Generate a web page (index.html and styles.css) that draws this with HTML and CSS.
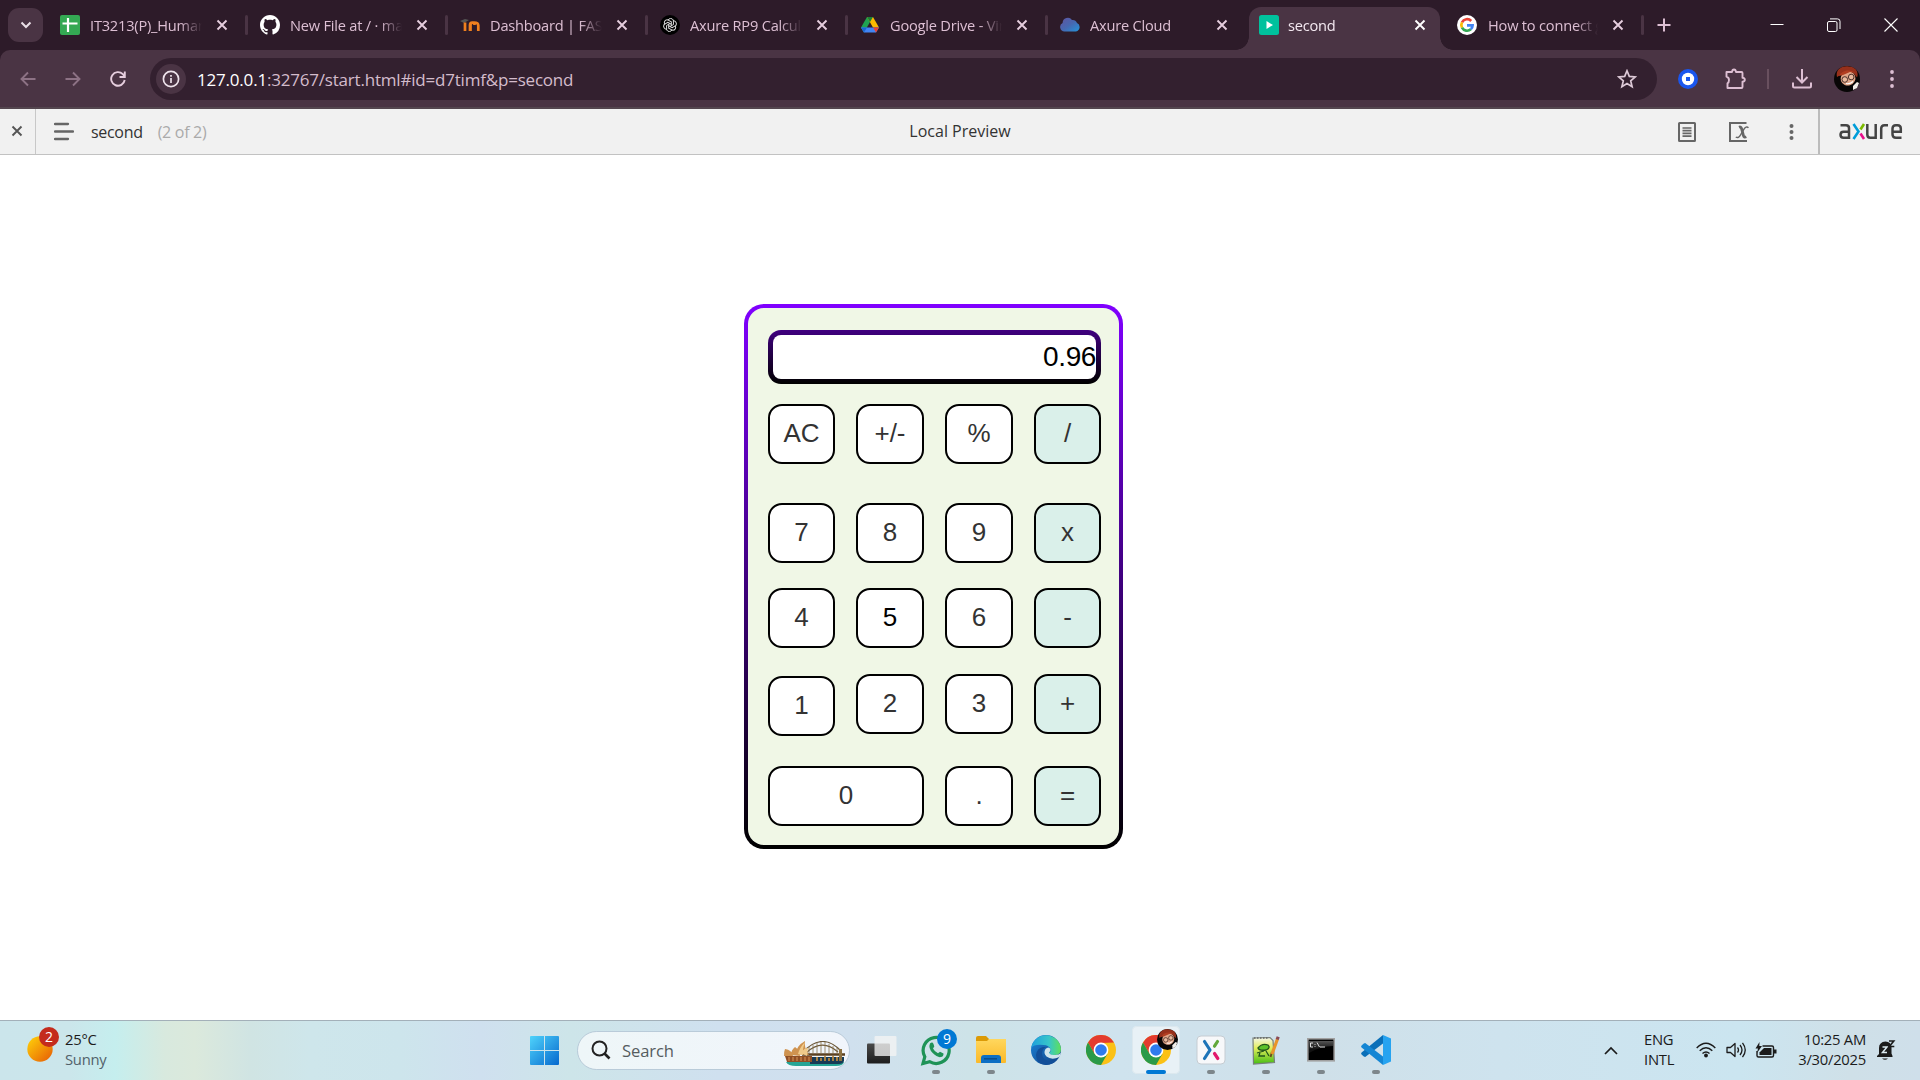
FILE: index.html
```html
<!DOCTYPE html>
<html lang="en">
<head>
<meta charset="utf-8">
<title>second</title>
<link rel="stylesheet" href="styles.css">
</head>
<body>
<svg width="0" height="0" class="defs">
  <defs>
    <symbol id="x" viewBox="0 0 16 16"><path d="M3.500 3.500l9 9M12.500 3.500l-9 9" stroke="currentColor" stroke-width="1.900" fill="none"/></symbol>
    <symbol id="chrome" viewBox="0 0 30 30">
      <circle cx="15" cy="15" r="15" fill="#fbc116"/>
      <path d="M2 7.500A15 15 0 0 1 28 7.500L15 8 8.500 18.700z" fill="#e33b2e"/>
      <path d="M2 7.500A15 15 0 0 0 15 30L21.500 18.700 15 22 8.500 18.700z" fill="#2a9a48"/>
      <circle cx="15" cy="15" r="7.400" fill="#fff"/><circle cx="15" cy="15" r="5.800" fill="#2f7bed"/>
    </symbol>
    <symbol id="avatar" viewBox="0 0 26 26">
      <circle cx="13" cy="13" r="13" fill="#080606"/>
      <path d="M3 11C1 3 9-1 15 .5c7 .5 10 6 8 11l-4-5-10 1z" fill="#96301b"/>
      <ellipse cx="14" cy="12.500" rx="7.500" ry="7" fill="#dfa486" transform="rotate(-20 14 12.500)"/>
      <path d="M5 10C7 5 15 2 21.500 7l-5.500-1-7 3z" fill="#b13d20"/>
      <circle cx="10.800" cy="13.500" r="2.800" fill="#e9b99d" stroke="#3b2420" stroke-width=".9"/><circle cx="17.200" cy="11" r="2.800" fill="#e9b99d" stroke="#3b2420" stroke-width=".9"/>
      <path d="M12 17.500q4 1 7-2" stroke="#fff" stroke-width="1.200" fill="none"/>
      <path d="M19 20l4-4 2 1-2 5-4 2z" fill="#f3eee9"/>
    </symbol>
    <linearGradient id="win" x2="1" y2="1"><stop stop-color="#4fd3fb"/><stop offset="1" stop-color="#0669ce"/></linearGradient>
    <linearGradient id="sun" x2="1" y2="1"><stop offset=".1" stop-color="#fdc909"/><stop offset="1" stop-color="#e65a05"/></linearGradient>
    <linearGradient id="dark" x2="0" y2="1"><stop stop-color="#4a4a4a"/><stop offset="1" stop-color="#1d1d1d"/></linearGradient>
    <linearGradient id="edgeTop" x2="1" y2="0"><stop stop-color="#1f9fdc"/><stop offset=".6" stop-color="#37c6c9"/><stop offset="1" stop-color="#5fe05a"/></linearGradient>
    <linearGradient id="edgeLow" x2="1" y2="1"><stop stop-color="#1a86dd"/><stop offset="1" stop-color="#123f80"/></linearGradient>
    <linearGradient id="folder" x2="0" y2="1"><stop stop-color="#ffd75e"/><stop offset="1" stop-color="#fbb928"/></linearGradient>
    <linearGradient id="cloud" x2="1" y2="1"><stop stop-color="#5f55a0"/><stop offset=".5" stop-color="#4767b1"/><stop offset="1" stop-color="#2494da"/></linearGradient>
    <linearGradient id="term" x2="0" y2="1"><stop stop-color="#555"/><stop offset=".7" stop-color="#111"/></linearGradient>
    <linearGradient id="note" x2="0" y2="1"><stop stop-color="#f4f5ea"/><stop offset=".4" stop-color="#e3ee5c"/><stop offset="1" stop-color="#45bd12"/></linearGradient>
  </defs>
</svg>

<div class="browser">
<header class="tabstrip">
  <button class="tab-search"><svg width="14" height="14" viewBox="0 0 14 14"><path d="M2.500 4.500L7 9l4.500-4.500" stroke="#eadfe7" stroke-width="2" fill="none"/></svg></button>

  <div class="tab">
    <svg class="fav" viewBox="0 0 20 20"><rect width="20" height="20" rx="2" fill="#34a853"/><path d="M8 3v14M2.500 8.500h15" stroke="#fff" stroke-width="2.200"/></svg>
    <span class="title">IT3213(P)_Human</span><svg class="close"><use href="#x"/></svg>
  </div>
  <div class="tab">
    <svg class="fav" viewBox="0 0 16 16"><path fill="#fff" d="M8 0C3.580 0 0 3.580 0 8c0 3.540 2.290 6.530 5.470 7.590.4.070.55-.17.55-.38 0-.19-.01-.82-.01-1.490-2.010.37-2.530-.49-2.690-.94-.09-.23-.48-.94-.82-1.130-.28-.15-.68-.52-.01-.53.63-.01 1.080.58 1.230.82.72 1.210 1.870.87 2.330.66.070-.52.28-.87.51-1.070-1.780-.2-3.640-.89-3.640-3.950 0-.87.31-1.590.82-2.150-.08-.2-.36-1.020.08-2.120 0 0 .67-.21 2.200.82.64-.18 1.320-.27 2-.27s1.360.09 2 .27c1.530-1.040 2.200-.82 2.200-.82.44 1.100.16 1.920.08 2.120.51.56.82 1.270.82 2.150 0 3.070-1.870 3.750-3.650 3.950.29.25.54.73.54 1.480 0 1.070-.01 1.930-.01 2.200 0 .21.15.46.55.38A8.010 8.010 0 0 0 16 8c0-4.420-3.580-8-8-8z"/></svg>
    <span class="title">New File at / · mal</span><svg class="close"><use href="#x"/></svg>
  </div>
  <div class="tab">
    <svg class="fav" viewBox="0 0 20 20"><path d="M0 6l5-2 4 1-5 3z" fill="#555"/><path d="M5 16V7.500M10 16v-6q0-2.500 2.300-2.500T14.500 10M10.500 16v-6.500q.5-2 3.500-2 4.300 0 4.300 3V16" stroke="#f0801e" stroke-width="2.700" fill="none"/></svg>
    <span class="title">Dashboard | FASV</span><svg class="close"><use href="#x"/></svg>
  </div>
  <div class="tab">
    <svg class="fav" viewBox="0 0 20 20"><circle cx="10" cy="10" r="10" fill="#000"/><g fill="none" stroke="#ddd" stroke-width="1"><path id="petal" d="M8 5.200a3 3 0 0 1 5.300-.2L13.500 9.500 10 11.500"/><use href="#petal" transform="rotate(60 10 10)"/><use href="#petal" transform="rotate(120 10 10)"/><use href="#petal" transform="rotate(180 10 10)"/><use href="#petal" transform="rotate(240 10 10)"/><use href="#petal" transform="rotate(300 10 10)"/></g></svg>
    <span class="title">Axure RP9 Calcula</span><svg class="close"><use href="#x"/></svg>
  </div>
  <div class="tab">
    <svg class="fav" viewBox="0 0 20 20"><path d="M7 2L10 7 4 17.500 1 12.500z" fill="#1fa351"/><path d="M7 2h6l6 10.500h-6z" fill="#fcb900"/><path d="M13 2L7 2l3 5z" fill="#188038"/><path d="M1 12.500h18L16 17.500H4z" fill="#4285f4"/><path d="M13 12.500h6L16 17.500z" fill="#ea4335"/><path d="M1 12.500h6L4 17.500z" fill="#1967d2"/></svg>
    <span class="title">Google Drive - Vir</span><svg class="close"><use href="#x"/></svg>
  </div>
  <div class="tab last-before">
    <svg class="fav" viewBox="0 0 20 20"><path d="M4.500 16.500A4.500 4.500 0 0 1 2.600 8a5.200 5.200 0 0 1 9.400-3 4.800 4.800 0 0 1 5 3 4.500 4.500 0 0 1-1 8.500z" fill="url(#cloud)"/></svg>
    <span class="title">Axure Cloud</span><svg class="close"><use href="#x"/></svg>
  </div>
  <div class="tab active">
    <svg class="fav" viewBox="0 0 20 20"><rect width="20" height="20" rx="2.500" fill="#00c19d"/><path d="M7.500 6v8l6.500-4z" fill="#fff"/></svg>
    <span class="title">second</span><svg class="close"><use href="#x"/></svg>
  </div>
  <div class="tab google">
    <svg class="fav" viewBox="0 0 20 20"><circle cx="10" cy="10" r="10" fill="#fff"/><g fill="none" stroke-width="2.700"><path d="M5 7.300A5.700 5.700 0 0 1 14.200 6" stroke="#ea4335"/><path d="M5 7.300a5.700 5.700 0 0 0 0 5.400" stroke="#fbbc05"/><path d="M5 12.700a5.700 5.700 0 0 0 8.800 1.600" stroke="#34a853"/><path d="M13.800 14.300a5.500 5.500 0 0 0 1.800-4H10" stroke="#4285f4"/></g></svg>
    <span class="title">How to connect g</span><svg class="close"><use href="#x"/></svg>
  </div>
  <svg class="plus" width="14" height="14" viewBox="0 0 14 14"><path d="M7 .5v13M.5 7h13" stroke="#ddbfd3" stroke-width="2"/></svg>
  <div class="window-buttons">
    <svg width="14" height="14" viewBox="0 0 14 14"><path d="M.5 6.500h13" stroke="#fff"/></svg>
    <svg width="14" height="14" viewBox="0 0 14 14"><rect x=".5" y="3.500" width="9.500" height="10" rx="1.500" stroke="#fff" fill="none"/><path d="M3 .9h7.500Q13 .9 13 3.300V11" stroke="#fff" fill="none"/></svg>
    <svg width="14" height="14" viewBox="0 0 14 14"><path d="M.5.5l13 13M13.500.5l-13 13" stroke="#fff" stroke-width="1.100"/></svg>
  </div>
</header>

<nav class="toolbar">
  <div class="nav-icons">
    <svg viewBox="0 0 16 16" class="dim"><path d="M15.500 8H1.500M8 1.500L1.500 8 8 14.500"/></svg>
    <svg viewBox="0 0 16 16" class="dim"><path d="M.5 8h14M8 1.500L14.500 8 8 14.500"/></svg>
    <svg viewBox="0 0 16 16"><path d="M14.700 9A6.800 6.800 0 1 1 12.800 3.100L14.500 5M14.800.5V6H9.500"/></svg>
  </div>
  <div class="omnibox">
    <span class="info"><svg width="18" height="18" viewBox="0 0 18 18"><circle cx="9" cy="9" r="7.600" fill="none" stroke="#eee3eb" stroke-width="1.700"/><path d="M9 8v5M9 5v1.800" stroke="#eee3eb" stroke-width="1.700"/></svg></span>
    <span class="url"><b>127.0.0.1</b>:32767/start.html#id=d7timf&amp;p=second</span>
    <svg class="star" width="20" height="20" viewBox="0 0 20 20"><path d="M10 1.800l2.300 5.600 6 .5-4.600 3.900 1.400 5.900-5.100-3.200-5.100 3.200 1.400-5.900L1.700 7.900l6-.5z" fill="none" stroke="#ddc9d7" stroke-width="1.700"/></svg>
  </div>
  <div class="extensions">
    <svg width="20" height="20" viewBox="0 0 20 20"><circle cx="10" cy="10" r="10" fill="#1a56ee"/><circle cx="10" cy="10" r="6.200" fill="#fff"/><rect x="8" y="8" width="4" height="4" fill="#1a56ee"/></svg>
    <svg width="22" height="22" viewBox="0 0 22 22"><path d="M2.500 4H8q.3-2.500 2-2.500T12 4h5.500q1 0 1 1v4.800q2.300.2 2.300 2t-2.300 2V19q0 1-1 1h-14v-4.700Q5 14.500 5 12T2.500 8.700z" fill="none" stroke="#ddbfd3" stroke-width="1.900" stroke-linejoin="round"/></svg>
    <i></i>
    <svg width="20" height="20" viewBox="0 0 20 20"><path d="M10 0v13M4.500 8l5.500 5.500L15.500 8M1 13.500V17q0 1.500 1.500 1.500h15Q19 18.500 19 17v-3.500" fill="none" stroke="#ddbfd3" stroke-width="2"/></svg>
    <svg width="26" height="26"><use href="#avatar"/></svg>
    <svg width="6" height="18" viewBox="0 0 6 18"><g fill="#ddbfd3"><circle cx="3" cy="2" r="1.900"/><circle cx="3" cy="9" r="1.900"/><circle cx="3" cy="16" r="1.900"/></g></svg>
  </div>
</nav>
</div>

<section class="axbar">
  <div class="ax-close"><svg width="16" height="16"><use href="#x"/></svg></div>
  <div class="ax-left">
    <svg width="20" height="19" viewBox="0 0 20 19"><path d="M1 2h13M1 9.500h18M1 17h13" stroke="#666" stroke-width="2.300" stroke-linecap="round"/></svg>
    <span class="page-name">second</span><span class="page-count">(2 of 2)</span>
  </div>
  <div class="ax-title">Local Preview</div>
  <div class="ax-right">
    <svg width="18" height="20" viewBox="0 0 18 20"><rect x="1" y="1" width="16" height="18" rx=".5" fill="none" stroke="#666" stroke-width="2"/><path d="M4.500 6h9M4.500 8.700h9M4.500 11.400h9M4.500 14.100h9" stroke="#666" stroke-width="1.700"/></svg>
    <svg width="20" height="20" viewBox="0 0 20 20"><path d="M17.500 1H1v18h17" fill="none" stroke="#666" stroke-width="2"/><path d="M10 5.200q2-.8 2.600 1.500l1.700 6.500q.6 2.600 3 1.500" fill="none" stroke="#666" stroke-width="2.800"/><path d="M19.500 5.800q-2.300-2.300-5 2L11.500 13q-2 3.800-4.700 2" fill="none" stroke="#666" stroke-width="1.500"/></svg>
    <svg width="5" height="16" viewBox="0 0 5 16"><g fill="#666"><circle cx="2.500" cy="2" r="2"/><circle cx="2.500" cy="8" r="2"/><circle cx="2.500" cy="14" r="2"/></g></svg>
  </div>
  <div class="ax-logo">
    <svg width="64" height="18" viewBox="0 0 64 18"><g fill="none" stroke="#444" stroke-width="2.500"><path d="M1.500 2.300H7q3 0 3 2.800v9.700H4.500q-3 0-3-3 0-3 3-3H10"/><path d="M28.300 1v10.500q0 3.300 3 3.300h5.400V1"/><path d="M42.200 16V5.600q0-3.300 3.300-3.300h3.500"/><path d="M62.500 14.800h-5.500q-3.500 0-3.500-3.500V5.600q0-3.300 3.300-3.300h1.700q3.300 0 3.300 3.300v3.200h-8"/></g><path d="M14.500 1l5 7.500-5 7.500" fill="none" stroke="#009dd9" stroke-width="2.600"/><path d="M25 1l-3.500 5.500" stroke="#7cba00" stroke-width="2.600"/><path d="M21.500 10.500L25 16" stroke="#e80d8b" stroke-width="2.600"/></svg>
  </div>
</section>

<main class="stage">
  <div class="calculator">
    <output class="display">0.96</output>
    <div class="keys">
      <button>AC</button><button>+/-</button><button>%</button><button class="op">/</button>
      <button>7</button><button>8</button><button>9</button><button class="op">x</button>
      <button>4</button><button class="hover">5</button><button>6</button><button class="op">-</button>
      <button class="low">1</button><button>2</button><button>3</button><button class="op">+</button>
      <button class="wide">0</button><button>.</button><button class="op">=</button>
    </div>
  </div>
</main>

<footer class="taskbar">
  <div class="weather">
    <span class="sun"><svg width="26" height="26" viewBox="0 0 26 26"><circle cx="13" cy="13" r="12.700" fill="url(#sun)"/></svg><em class="badge red">2</em></span>
    <div class="two-line"><span>25°C</span><span class="soft">Sunny</span></div>
  </div>
  <div class="apps">
    <span class="start"><svg width="29" height="29" viewBox="0 0 29 29"><path d="M1 0h13v14H0V1q0-1 1-1zM15 0h13q1 0 1 1v13H15zM0 15h14v14H1q-1 0-1-1zM15 15h14v13q0 1-1 1H15z" fill="url(#win)"/></svg></span>
    <div class="search">
      <svg width="20" height="20" viewBox="0 0 20 20"><circle cx="8.500" cy="8.500" r="7" fill="none" stroke="#222" stroke-width="2"/><path d="M13.500 13.500l5 5" stroke="#222" stroke-width="2.600"/></svg>
      <span>Search</span>
      <svg class="opera" width="62" height="26" viewBox="0 0 62 26">
        <path d="M2 21h58q-1 4-8 4H12Q4 25 2 21z" fill="#25a596"/>
        <path d="M26 16h34v4q-1 3-5 3H26z" fill="#173a55"/>
        <path d="M33 20v-4M37 20v-3M41 20v-5M45 20v-3M49 20v-5M53 20v-4M57 20v-3" stroke="#c08a3c" stroke-width="1.700"/>
        <path d="M18 12Q38-10 57 10M22 12Q38-3 54 11" fill="none" stroke="#6b5738" stroke-width="1.200"/>
        <path d="M25 12V6M29 12V4M33 12V2M37 12V1M41 12V1M45 12V3M49 12V5M53 12V7" stroke="#8b744c" stroke-width=".8"/>
        <path d="M18 13.500h43" stroke="#5b4020" stroke-width="2.600"/>
        <path d="M55 8h3v12h-3z" fill="#8d7140"/>
        <path d="M1 15h27v6H3z" fill="#8f4f25"/><path d="M0 15Q0 10 1 8q7 1 8 7zM7 14Q7 9 11 6q5 3 5 9zM12 13q0-8 9-13-1 8 4 14z" fill="#cf9350"/><path d="M14 13q2-7 7-12-3 8-2 13zM17 12q3-5 7-5l-1 8z" fill="#efca8a"/>
        <path d="M5 16v4M9 16v4M13 16v4M17 16v4M21 16v4M25 16v4" stroke="#d89558" stroke-width="1"/>
      </svg>
    </div>
    <span class="app task-view"><svg width="30" height="28" viewBox="0 0 30 28"><rect y="7.500" width="23" height="20" rx="1" fill="url(#dark)"/><rect x="7.500" y="0" width="22" height="20" rx="1" fill="#f4f4f4" opacity=".78"/></svg></span>
    <span class="app run"><svg width="32" height="32" viewBox="0 0 32 32"><path d="M3 29.500l1.800-6.700A13 13 0 1 1 9.600 27.700z" fill="none" stroke="#1f9357" stroke-width="3.200"/><path d="M10 9.500q2.500-2 3.500.5l.8 2.500-1.300 2q1.800 3.500 5 4.800l2-1.600 3.500 1.800q.3 3-2.800 3.600-3.500.6-8-4-4.700-5-2.700-9.600z" fill="#1f9357"/></svg><em class="badge blue">9</em></span>
    <span class="app run"><svg width="30" height="28" viewBox="0 0 30 28"><path d="M0 2q0-2 2-2h8l3 3v6H0z" fill="#dc9a06"/><path d="M0 5h11l2-2h17v23q0 1-1 1H1q-1 0-1-1z" fill="url(#folder)"/><path d="M5 27v-5q0-3 3-3h14q3 0 3 3v5z" fill="#0d6fc4"/><path d="M8 22.800h13" stroke="#0a4c8c" stroke-width="1.500"/></svg></span>
    <span class="app"><svg width="30" height="30" viewBox="0 0 30 30"><circle cx="15" cy="15" r="15" fill="url(#edgeLow)"/><path d="M.2 13A15 15 0 0 1 30 14q0 6-6.500 6-5 0-6-2 3-1 2-4-2-4-7-4Q3 9 .2 13z" fill="url(#edgeTop)"/><path d="M15 12q-4 2-4 7 1 7 8 7 5 0 8-3-4 7-12 7Q5 29 5 20q1-7 7-8z" fill="#124f99"/><path d="M19.500 14q-2-3-5 0-2.500 4 1 7.500 5 4 13 .5l1.500-4q-2.500 2.500-7.500 2-4-.5-4.500-2.500 2-1 1.500-3.500z" fill="#cfe4ec"/></svg></span>
    <span class="app"><svg width="30" height="30"><use href="#chrome"/></svg></span>
    <span class="app current"><svg width="30" height="30"><use href="#chrome"/></svg><svg class="face" width="21" height="21"><use href="#avatar"/></svg></span>
    <span class="app run"><svg width="30" height="30" viewBox="0 0 30 30"><rect x="1" y="1" width="28" height="28" rx="4" fill="#f7f8fa" stroke="#c5ccd2"/><g stroke-width="3.200" stroke-linecap="round" fill="none"><path d="M8.500 6.500L14 15 8.500 23.500" stroke="#1d74b8" stroke-linejoin="round"/><path d="M21.500 6.500l-3 4.700" stroke="#62a83a"/><path d="M18.500 18.500l3.300 5" stroke="#e2186c"/></g></svg></span>
    <span class="app run"><svg width="30" height="30" viewBox="0 0 30 30"><path d="M2 3l17-.5 3 3 1.500 22-21 1.500z" fill="url(#note)" stroke="#77807a" stroke-width="1.200"/><path d="M3 3h15" stroke="#666" stroke-width="1.500" stroke-dasharray="1.500 1.500"/><path d="M7 13q4-5 10-3 3 3-2 5-7 1-8-2z" fill="#5cc22a"/><path d="M7 13q4-5 10-3 3 3-2 5-7 1-8-2zM6 18l7-2M15 16l3 5M9 17l-1 4h6" fill="none" stroke="#22551b" stroke-width="1.300"/><path d="M19.500 22l1.500-5" stroke="#6b4f1c" stroke-width="2"/><path d="M21 19l5.500-15" stroke="#e9952a" stroke-width="3.200"/><path d="M26.200 4.500l1-2.800" stroke="#8a4a55" stroke-width="3.200"/></svg></span>
    <span class="app run"><svg width="28" height="24" viewBox="0 0 28 24"><rect x=".8" y=".8" width="26.400" height="22" fill="#000" stroke="#a0a0a0" stroke-width="1.600"/><path d="M2 3h24v5Q14 8 2 15z" fill="url(#term)"/><path d="M6 5H3.500v4H6M8 6v.8M8 8v.8M10 4.500l2.500 4.500M13 9h5" stroke="#ddd" fill="none"/></svg></span>
    <span class="app run"><svg width="30" height="30" viewBox="0 0 30 30"><path d="M22 0L30 3.500v23L22 30z" fill="#26a3f0"/><path d="M22 0v8.500L4.200 22 2.800 21.500.6 19.500q-1-1 0-2z" fill="#0a6fb8"/><path d="M22 30v-8.500L4.200 8 2.800 8.500.6 10.500q-1 1 0 2z" fill="#1486d4"/></svg></span>
  </div>
  <div class="tray">
    <svg class="chev" width="14" height="9" viewBox="0 0 14 9"><path d="M1 8l6-6 6 6" fill="none" stroke="#1b1b1b" stroke-width="1.700"/></svg>
    <div class="two-line lang"><span>ENG</span><span>INTL</span></div>
    <svg class="wifi" width="20" height="16" viewBox="0 0 20 16"><g fill="none" stroke="#1b1b1b" stroke-width="1.400"><path d="M.7 6Q10-3.500 19.300 6M3.700 8.700q6.300-6 12.600 0M6.500 11.500q3.500-3.200 7 0"/></g><circle cx="10" cy="13.500" r="1.900" fill="#1b1b1b"/></svg>
    <svg class="sound" width="20" height="18" viewBox="0 0 20 18"><path d="M1 6.500h3.500L9 2.500v13l-4.500-4H1zM11.500 6.500q2 2.500 0 5M14 4q4 5 0 10M16.500 1.800q5.500 7.200 0 14.400" fill="none" stroke="#1b1b1b" stroke-width="1.300" stroke-linejoin="round"/></svg>
    <svg class="battery" width="22" height="17" viewBox="0 0 22 17"><path d="M7.500 4H17q1.500 0 1.500 1.500v8q0 1.500-1.500 1.500H3.500Q2 15 2 13.500V9" fill="none" stroke="#1b1b1b" stroke-width="1.400"/><rect x="19" y="7.500" width="2.500" height="4" fill="#1b1b1b"/><path d="M9 6h7.500v7h-12v-2.500z" fill="#1b1b1b"/><path d="M4.500 0L.5 6.500H3L2 11l5-7H4.300z" fill="#1b1b1b"/></svg>
    <div class="two-line clock"><span>10:25 AM</span><span>3/30/2025</span></div>
    <svg class="bell" width="19" height="21" viewBox="0 0 19 21"><path d="M2 14V8q0-6 6.500-6.500 5.500 0 6 6v6l1 2.500v1H0v-1z" fill="#1b1b1b"/><path d="M5 18.500h6q-3 2.500-6 0z" fill="#1b1b1b"/><path d="M5.500 7h4.500l-4.500 5.500H10" fill="none" stroke="#dceaf0" stroke-width="1.500"/><path d="M12 1h4.800L12.300 6.500h5" fill="none" stroke="#1b1b1b" stroke-width="1.600"/></svg>
  </div>
</footer>
</body>
</html>
```
FILE: styles.css
```css
* { box-sizing: border-box; }
body {
  margin: 0; width: 1920px; height: 1080px; overflow: hidden;
  display: flex; flex-direction: column;
  background: #fff; font-family: "Open Sans", "Noto Sans", sans-serif;
}
.defs { position: absolute; }
svg { display: block; flex: none; }
button { font: inherit; padding: 0; border: 0; }
.browser { flex: none; background: #2d1b29; }

/* tab strip */
.tabstrip { height: 50px; display: flex; align-items: center; padding-left: 8px; }
.tab-search { width: 35px; height: 34px; margin-right: 5px; border-radius: 11px; background: #4a3444; display: flex; align-items: center; justify-content: center; }
.tab { width: 200px; height: 43px; margin-top: 7px; padding: 0 0 7px 12px; display: flex; align-items: center; flex: none; position: relative; }
.tab::after { content: ""; width: 3px; height: 20px; margin-left: 15px; border-radius: 2px; background: #4a3444; }
.tab .fav { width: 20px; height: 20px; margin-right: 10px; }
.tab .title {
  width: 112px; overflow: hidden; white-space: nowrap; font-size: 14.6px; letter-spacing: -.2px; line-height: 22px; color: #ddbfd3;
  -webkit-mask-image: linear-gradient(90deg, #000 80%, transparent); mask-image: linear-gradient(90deg, #000 80%, transparent);
}
.tab .close { width: 16px; height: 16px; margin-left: 12px; color: #e6cede; }
.tab.last-before::after { visibility: hidden; }
.tab.active { width: 191px; margin-left: 1px; padding-left: 10px; background: #4a3444; border-radius: 12px 12px 0 0; }
.tab.active .title { color: #f4e9f1; }
.tab.active .fav { margin-right: 9px; }
.tab.active .close { color: #fff; }
.tab.active::before, .tab.active::after { content: ""; position: absolute; bottom: 0; width: 13px; height: 13px; margin: 0; border-radius: 0; }
.tab.active::before { left: -13px; background: radial-gradient(circle at 0 0, transparent 12.5px, #4a3444 13px); }
.tab.active::after { right: -13px; background: radial-gradient(circle at 100% 0, transparent 12.5px, #4a3444 13px); }
.tab.google { width: 204px; padding-left: 17px; }
.tab.google .fav { margin-right: 11px; }
.plus { margin-left: 13px; }
.window-buttons { margin-left: auto; margin-right: 22px; display: flex; gap: 43px; }

/* address bar */
.toolbar { height: 59px; display: flex; align-items: center; padding: 0 25px 0 20px; background: #4a3444; border-bottom: 2px solid #54464f; border-radius: 10px 10px 0 0; }
.nav-icons { display: flex; gap: 29px; width: 130px; }
.nav-icons svg { width: 16px; height: 16px; fill: none; stroke: #e6cede; stroke-width: 1.9; }
.nav-icons .dim { stroke: #8d7285; }
.omnibox { width: 1507px; height: 42px; padding: 0 20px 0 6px; border-radius: 21px; background: #33202f; display: flex; align-items: center; }
.info { width: 30px; height: 30px; border-radius: 50%; background: #4a3444; display: flex; align-items: center; justify-content: center; }
.url { margin-left: 11px; font-size: 17px; letter-spacing: -.2px; padding-top: 1px; color: #d3bccc; white-space: nowrap; }
.url b { font-weight: 400; color: #fff; }
.star { margin-left: auto; }
.extensions { display: flex; align-items: center; margin-left: auto; }
.extensions svg:nth-of-type(2) { margin-left: 26px; }
.extensions i { width: 2px; height: 20px; margin: 0 23px 0 21px; background: #69505f; }
.extensions svg:nth-of-type(4) { margin-left: 22px; }
.extensions svg:nth-of-type(5) { margin-left: 29px; }

/* preview bar */
.axbar { flex: none; height: 46px; display: grid; grid-template-columns: 36px 824px 200px 1fr 102px; background: #f1f1f1; border-bottom: 1px solid #c2c2c2; color: #333; font-size: 16px; letter-spacing: -.3px; }
.axbar > div { display: flex; align-items: center; white-space: nowrap; }
.axbar .ax-close { border-right: 1px solid #c8c8c8; justify-content: center; color: #555; padding: 0 1px 1px 0; }
.axbar .ax-left { padding-left: 18px; }
.page-name { margin-left: 17px; }
.page-count { margin-left: 15px; color: #aaa; }
.axbar .ax-title { justify-content: center; padding-bottom: 2px; letter-spacing: 0; }
.axbar .ax-right { justify-content: flex-end; gap: 33px; padding-right: 24px; }
.ax-right svg:last-child { margin-left: 7px; }
.axbar .ax-logo { border-left: 2px solid #bcbcbc; padding-left: 19px; }

/* calculator */
.stage { flex: 1; padding: 149px 0 0 744px; }
.calculator {
  width: 379px; height: 545px; padding: 22px 20px 0; border: 4px solid transparent; border-radius: 20px;
  background: linear-gradient(#f0f7e6, #f0f7e6) padding-box, linear-gradient(#8000ff, #000) border-box;
}
.display {
  display: block; width: 333px; height: 54px; border: 5px solid transparent; border-radius: 13px;
  background: linear-gradient(#fff, #fff) padding-box, linear-gradient(#400080, #000) border-box;
  font: 28px/43px "Liberation Sans", Arial, sans-serif; letter-spacing: -.4px; text-align: right; color: #000;
}
.keys { margin-top: 20px; display: grid; grid-template-columns: 67px 68px 68px 67px; grid-template-rows: 99px 85px 86px 92px 60px; column-gap: 21px; }
.keys button { height: 60px; padding: 0 0 2px; border: 2px solid #000; border-radius: 14px; background: #fff; color: #333; font: 26px "Liberation Sans", Arial, sans-serif; }
.keys .op { background: #daf0ea; }
.keys .hover { color: #000; }
.keys .low { margin-top: 2px; padding-bottom: 1px; }
.keys .wide { grid-column: span 2; padding-bottom: 1px; }

/* taskbar */
.taskbar {
  flex: none; height: 60px; display: flex; align-items: center; border-top: 1px solid #a3b0b9;
  background: linear-gradient(90deg, #cbe5eb 0, #cbe6eb 70px, #c5eeee 115px, #d8e9de 165px, #dbe9dc 195px, #d0e4e3 250px, #cee6eb 310px, #cde5ec 400px, #cfe0ef 480px, #cde5e9 570px, #cfe0ef 720px, #d0e0ee 850px, #cde3e8 970px, #cfe3ee 1120px, #cfe0e9 1320px, #cee3ee 1500px, #cbe5f0 1740px, #cfe0e8 1850px, #cfdfea 1920px);
}
.two-line { display: flex; flex-direction: column; font-size: 14.8px; letter-spacing: -.25px; line-height: 20px; color: #1b1b1b; padding-bottom: 4px; }
.two-line .soft { color: #52616a; }
.badge { position: absolute; width: 20px; height: 20px; border-radius: 50%; color: #fff; font: 14px/19px "Open Sans", sans-serif; text-align: center; }
.red { background: #c42b1c; left: 12px; top: -9px; }
.blue { background: #0078d4; right: 3px; top: 3px; }
.weather { width: 517px; padding-left: 27px; display: flex; align-items: center; }
.sun { position: relative; width: 26px; margin-right: 12px; margin-top: -3px; }
.apps { display: flex; align-items: center; padding-bottom: 1px; }
.start { width: 60px; padding-left: 13px; }
.search { width: 273px; height: 39px; padding: 0 3px 0 13px; border: 1px solid #b9cbd9; border-radius: 20px; background: linear-gradient(90deg, #eef6f8, #f1f5fb); display: flex; align-items: center; }
.search span { margin-left: 11px; font-size: 16.6px; letter-spacing: -.1px; color: #555c60; }
.opera { margin-left: auto; margin-top: 8px; }
.app { position: relative; width: 48px; height: 48px; margin-right: 7px; display: flex; align-items: center; justify-content: center; }
.task-view { margin-left: 7px; }
.run::after, .current::after { content: ""; position: absolute; bottom: 0; width: 8px; height: 4px; border-radius: 2px; background: #7d868b; }
.current { background: #e8f1f6; border-radius: 5px; box-shadow: 0 0 0 1px #dce8ee inset; }
.current::after { width: 20px; background: #0078d4; }
.task-view svg { margin-right: -1px; }
.face { position: absolute; right: 2px; top: 3px; }
.tray { display: flex; align-items: center; margin-left: auto; padding: 0 24px 1px 0; }
.tray .two-line { padding-bottom: 2px; }
.lang { margin-left: 26px; width: 52px; }
.sound { margin-left: 10px; }
.battery { margin-left: 9px; }
.clock { width: 89px; text-align: right; }
.bell { margin-left: 11px; }
```
